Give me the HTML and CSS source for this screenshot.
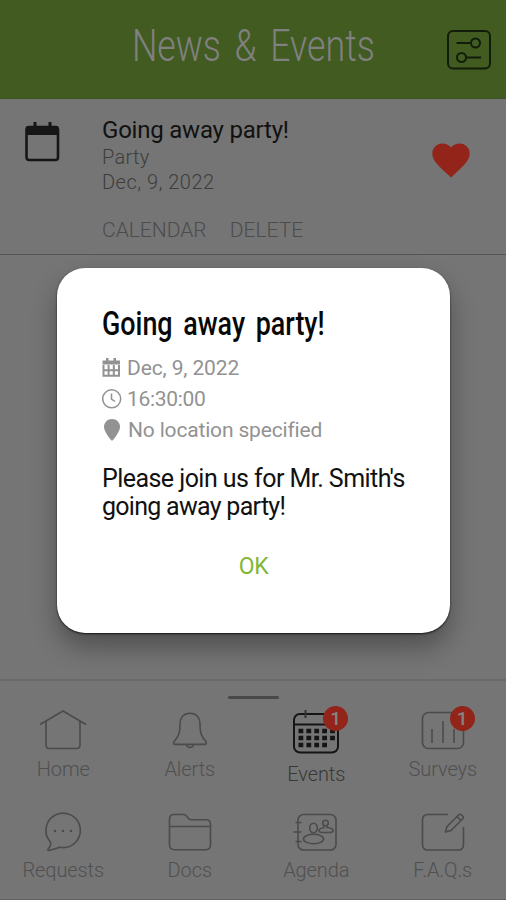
FILE: index.html
```html
<!DOCTYPE html>
<html lang="en">
<head>
<meta charset="utf-8">
<title>News &amp; Events</title>
<link rel="stylesheet" href="styles.css">
</head>
<body>
<div class="app">
  <header class="topbar">
    <h1>News &amp; Events</h1>
    <svg class="filter" width="46" height="42" viewBox="0 0 46 42"><rect x="2" y="2" width="42" height="37.500" rx="5"/><path d="M10.500 14H24M20.500 28.500H35"/><circle cx="29.500" cy="14" r="4.500"/><circle cx="15.500" cy="28.500" r="4.500"/></svg>
  </header>
  <article class="event">
    <svg class="event-icon" width="36" height="41" viewBox="0 0 36 41"><rect x="2.500" y="6" width="31.500" height="33" rx="2.500" fill="none" stroke="#161616" stroke-width="2.600"/><path d="M2 14V7q0-2 2-2h28.500q2 0 2 2v7zM9.500 1h3v5h-3zM24.500 1h3v5h-3z" fill="#161616"/></svg>
    <div class="event-body">
      <h2><span>Going away party!</span></h2>
      <p class="kind">Party</p>
      <p class="date">Dec, 9, 2022</p>
      <div class="actions"><span>CALENDAR</span><span>DELETE</span></div>
    </div>
    <svg class="heart" width="38" height="35" viewBox="0 0 38 35"><path d="M19 34.500 16.300 32C6.500 23.100.3 17.500.3 10.600.3 5 4.700.600 10.300.600c3.400 0 6.500 1.500 8.700 4 2.200-2.500 5.300-4 8.700-4 5.600 0 10 4.400 10 10 0 6.900-6.200 12.500-16 21.400z"/></svg>
  </article>
  <main class="space"></main>
  <nav class="tabs">
    <i class="handle"></i>
    <div class="grid">
      <a class="tab"><svg width="48" height="42" viewBox="0 0 48 42"><path d="M1 15.500 24 2l23 13.500M7 12.500V36q0 3.500 3.500 3.500h27Q41 39.500 41 36V12.500"/></svg><span>Home</span></a>
      <a class="tab"><svg width="48" height="42" viewBox="0 0 48 42"><path d="M24 4.200c-6.500 0-10 4.500-10 10.300 0 10-1.500 13-5.500 17.500-1.500 2-1 3.400 1 3.400h29c2 0 2.500-1.400 1-3.400-4-4.500-5.500-7.500-5.500-17.500 0-5.800-3.500-10.300-10-10.300M20.500 35.500c.5 4 6.500 4 7 0"/></svg><span>Alerts</span></a>
      <a class="tab active"><svg width="48" height="48" viewBox="0 0 48 48"><rect x="2" y="5" width="44" height="38.500" rx="6"/><path d="M2 15.500h44"/><path class="ring" d="M13.500 1v8"/><path class="days" d="M6.500 22h36.500M6.500 29h36.500M6.500 36h28.500"/></svg><b class="badge">1</b><span>Events</span></a>
      <a class="tab"><svg width="48" height="42" viewBox="0 0 48 42"><rect x="3.500" y="3.500" width="41" height="36" rx="6"/><path d="M13 20v14M24 12v22M35 20v14"/></svg><b class="badge">1</b><span>Surveys</span></a>
      <a class="tab"><svg width="48" height="42" viewBox="0 0 48 42"><g transform="translate(1.500 0)"><path d="M9.500 31.500A17.200 17.200 0 1 1 19 37.200Q14 39 8.500 40.500 6.500 40.700 8 38.500 11.500 34.500 9.500 31.500z"/><path class="dots" d="M14.500 21h.01M22.500 21h.01M30.500 21h.01"/></g></svg><span>Requests</span></a>
      <a class="tab"><svg width="48" height="42" viewBox="0 0 48 42"><path d="M3.500 9q0-4.500 4.500-4.500h9.500q2 0 3 1.500l2 2.500q1 1.300 3 1.300H40q4.500 0 4.500 4.500v20.500q0 5-5 5H8.500q-5 0-5-5zM3.500 16.500h41"/></svg><span>Docs</span></a>
      <a class="tab"><svg width="48" height="42" viewBox="0 0 48 42"><rect x="6" y="4.500" width="38" height="35.500" rx="5.500"/><path d="M3.500 12.500h6M1.500 22h8M3.500 31.500h6"/><ellipse cx="21.500" cy="18" rx="3.800" ry="4.800"/><ellipse cx="21.500" cy="29" rx="10" ry="4.800"/><circle cx="33.500" cy="13" r="2.800"/><path d="M32 15.500v2q-5 1-5 3 0 2 3 2h8q3 0 3-2 0-2.500-6-3v-2"/></svg><span>Agenda</span></a>
      <a class="tab"><svg width="48" height="42" viewBox="0 0 48 42"><path d="M29 4.500H9Q3.500 4.500 3.500 10v24.500q0 5.500 5.500 5.500h30q5.500 0 5.500-5.500V17M26.500 22l1.500-5.500L39.500 5q1.500-1.500 3.200 0l.8.800q1.500 1.700 0 3.200L32 20.500zM38 6.500l4 4"/></svg><span>F.A.Q.s</span></a>
    </div>
  </nav>
</div>
<section class="dialog">
  <h2>Going away party!</h2>
  <ul>
    <li><svg width="20" height="20" viewBox="0 0 20 20"><path d="M4 0h2.500v3H4zM11.500 0H14v3h-2.500zM.5 2.500h17.500v4H.5z" fill="#929292"/><path d="M1.500 7v10.700H17V7M1.500 12.300H17M6.600 7v10.500M11.800 7v10.500" fill="none" stroke="#929292" stroke-width="2"/></svg><span class="d-date">Dec, 9, 2022</span></li>
    <li><svg width="20" height="20" viewBox="0 0 20 20"><path d="M9.500 4.500V10l3.500 2.500" fill="none" stroke="#929292" stroke-width="1.500"/><circle cx="9.700" cy="9.800" r="9" fill="none" stroke="#929292" stroke-width="1.500"/></svg><span class="d-time">16:30:00</span></li>
    <li><svg width="20" height="22" viewBox="0 0 20 22"><path d="M10 0C5.500 0 2 3.500 2 8c0 3.500 4 9.500 7 13q1 1 2 0c3-3.500 7-9.500 7-13 0-4.500-3.500-8-8-8z" fill="#929292"/></svg><span class="d-place">No location specified</span></li>
  </ul>
  <p class="message"><span>Please join us for Mr. Smith's</span> <span>going away party!</span></p>
  <div class="buttons"><button>OK</button></div>
</section>
</body>
</html>
```
FILE: styles.css
```css
* { box-sizing: border-box; }
body, h1, h2, p, ul { margin: 0; padding: 0; }
body { width: 506px; height: 900px; overflow: hidden; position: relative; font-family: Roboto, sans-serif; font-weight: 300; background: #757575; }
h1, h2 { font-weight: 300; }
span { white-space: nowrap; }
svg { display: block; flex: none; }
.app { height: 900px; display: flex; flex-direction: column; }
.topbar { height: 99px; flex: none; background: #415b20; border-bottom: 1px solid #3c5125; display: flex; justify-content: center; padding-top: 19px; position: relative; }
.topbar h1 { font-size: 44px; line-height: 54px; color: #808080; white-space: nowrap; word-spacing: 6px; transform: scaleX(.813); font-weight: 350; }
.filter { position: absolute; right: 14px; top: 29px; fill: none; stroke: #111c0b; stroke-width: 2; }
.event { height: 156px; flex: none; display: flex; padding-left: 24px; border-bottom: 1px solid #555; }
.event-icon { margin-top: 22px; }
.event-body { margin-left: 42px; padding-top: 17px; width: 330px; }
.event-body h2 { font-size: 24px; line-height: 29px; font-weight: 400; color: #111; letter-spacing: -.22px; }
.event-body p { font-size: 20px; line-height: 25px; color: #3d3d3d; }
.event-body .kind { letter-spacing: .3px; }
.event-body .date { letter-spacing: .5px; }
.actions { display: flex; gap: 23px; margin-top: 22px; font-size: 21px; line-height: 26px; color: #4c4c4c; }
.heart { margin-top: 44px; fill: #922419; }
.space { flex: 1; }
.tabs { height: 221px; flex: none; border-top: 2px solid #6a6a6a; padding-top: 15px; border-bottom: 1px solid #626262; }
.handle { display: block; width: 51px; height: 3px; margin: 0 auto; background: #494949; border-radius: 2px; }
.grid { display: grid; grid-template-columns: repeat(4, 126.500px); grid-template-rows: 101px 90px; padding-top: 10px; }
.tab { display: flex; flex-direction: column; align-items: center; position: relative; font-size: 20px; letter-spacing: -.1px; color: #505050; }
.tab svg { fill: none; stroke: #4b4b4b; stroke-width: 1.600; stroke-linejoin: round; }
.tab span { line-height: 26px; margin-top: 5px; }
.tab.active { color: #383838; }
.tab.active svg { stroke: #151515; stroke-width: 2; }
.tab.active span { margin-top: 4px; }
.tab.active .ring { stroke: #333; }
.tab .days { stroke-width: 4.500; stroke-dasharray: 4.800 3.100; }
.tab .dots { stroke-width: 2.600; stroke-linecap: round; }
.badge { position: absolute; left: 70px; top: -3px; width: 25px; height: 25px; border-radius: 50%; background: #922419; color: #858585; font-size: 19px; line-height: 25px; text-align: center; font-weight: 500; }
.dialog { position: absolute; left: 57px; top: 268px; width: 393px; height: 365px; border-radius: 28px; background: #fff; padding: 35px 40px 0 45px; box-shadow: 0 1px 2px #151515, 0 14px 26px rgba(0,0,0,.32); }
.dialog h2 { font-size: 34px; line-height: 40px; font-weight: 500; color: #080808; white-space: nowrap; word-spacing: 5px; transform: scaleX(.79); transform-origin: left; }
.dialog ul { list-style: none; margin-top: 9px; }
.dialog li { display: flex; align-items: center; height: 31px; font-size: 21px; color: #929292; gap: 5px; }
.dialog li span { font-weight: 400; letter-spacing: -.12px; }
.dialog li .d-time { letter-spacing: -.3px; }
.dialog li .d-place { margin-left: 1px; letter-spacing: -.17px; }
.message { margin-top: 20px; font-size: 25px; line-height: 28px; color: #111; font-weight: 400; letter-spacing: -.55px; }
.message span { display: block; margin-top: 0; }
.message span + span { letter-spacing: -.72px; }
.buttons { margin: 32px 0 0 -5px; display: flex; justify-content: center; }
.buttons button { border: 0; background: none; padding: 0; font: 400 23px/28px Roboto, sans-serif; letter-spacing: -.5px; color: #82b733; }
```
